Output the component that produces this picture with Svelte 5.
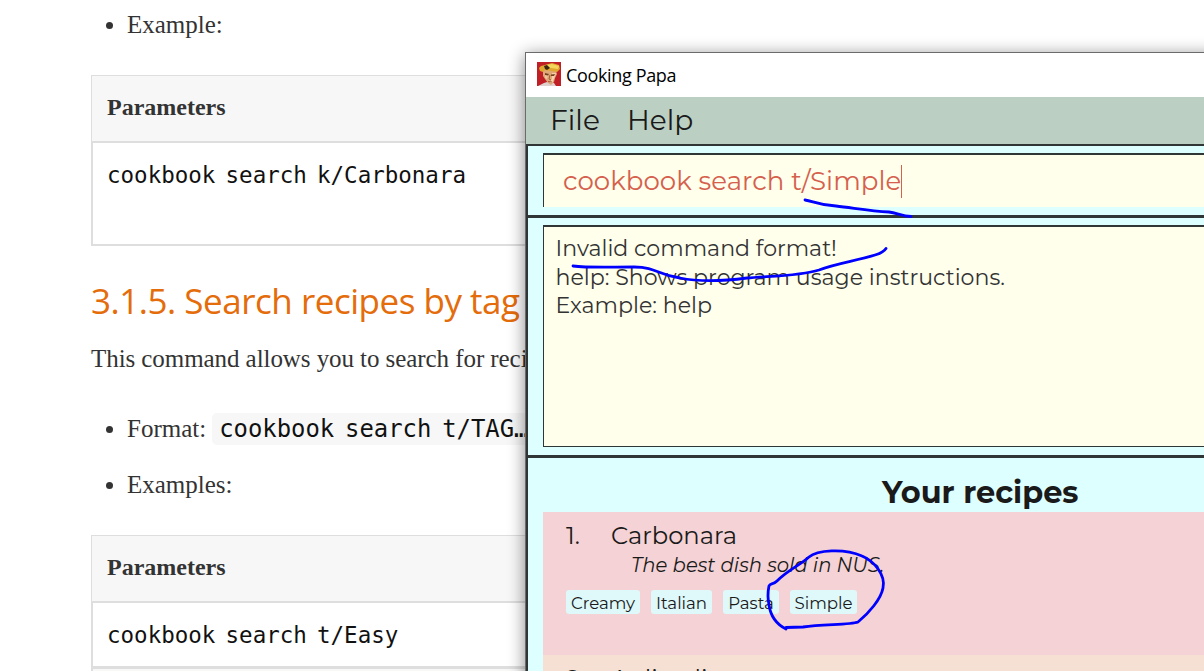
<script>
  const tags = [
    { name: 'Creamy', width: 74 },
    { name: 'Italian', width: 61 },
    { name: 'Pasta', width: 56 },
    { name: 'Simple', width: 67 }
  ];
</script>

<div class="screen">
  <main class="doc">
    <ul class="first"><li>Example:</li></ul>
    <div class="table one">
      <div class="th">Parameters</div>
      <div class="td"><code>cookbook search k/Carbonara</code></div>
    </div>
    <h4>3.1.5. Search recipes by tag</h4>
    <p>This command allows you to search for recipes by tag.</p>
    <ul class="list">
      <li>Format: <code class="chip">cookbook search t/TAG…</code></li>
      <li>Examples:</li>
    </ul>
    <div class="table two">
      <div class="th">Parameters</div>
      <div class="td"><code>cookbook search t/Easy</code></div>
      <div class="td alt"></div>
    </div>
  </main>

  <section class="window">
    <header>
      <svg width="24" height="24" viewBox="0 0 24 24">
        <rect width="24" height="24" fill="#c11f26" />
        <path d="M1 24 7 21 10 20 17 21 19 24Z" fill="#ded1ce" />
        <path d="M6 9 9 6 19 9 20 12 18 16 17 20 14 23 11 21 8 17 6 14Z" fill="#dfa878" />
        <path d="M15 11 19 11 17 17 15 21 13 21 15 16Z" fill="#f6d3ae" />
        <path d="M8 12 11 13 10 17 8 16Z" fill="#f0c59b" />
        <path d="M2 6 4 4 8 3 15 1 22 3 23 7 20 10 14 9 8 8 6 10 3 9Z" fill="#dfa92f" />
        <path d="M9 3 15 2 22 4 21 7 14 6 9 5Z" fill="#f4d65b" />
        <path d="M7 4 10 3 13 6 10 8 8 7Z" fill="#3c2512" />
        <path d="M8 11 12 12 11 13.500 8 13ZM14 12.500 18 12 17 14 14 14Z" fill="#76421f" />
        <path d="M13 13 12 17 14 18M11 19.500 15 20" fill="none" stroke="#a25d35" />
      </svg>
      <span>Cooking Papa</span>
    </header>
    <nav><span class="file">File</span><span class="help">Help</span></nav>
    <div class="body">
      <div class="command"><div class="input"><span>cookbook search t/Simple</span><i></i></div></div>
      <div class="result">
        <div class="output">
          <div>Invalid command format!</div>
          <div>help: Shows program usage instructions.</div>
          <div>Example: help</div>
        </div>
      </div>
      <div class="recipes">
        <h2>Your recipes</h2>
        <article>
          <div class="name"><span class="num">1.</span><span>Carbonara</span></div>
          <div class="desc">The best dish sold in NUS.</div>
          <div class="tags">
            {#each tags as tag}
              <span style="width:{tag.width}px">{tag.name}</span>
            {/each}
          </div>
        </article>
        <article class="second">
          <div class="name"><span class="num">2.</span><span>Aglio olio</span></div>
        </article>
      </div>
    </div>
  </section>

  <svg class="ink" width="1204" height="671" viewBox="0 0 1204 671">
    <path d="M805 200C813 201 817 205 836 206C854 208 870 211 889 212C897 213 902 216 911 216.500" />
    <path d="M573 266C588 268 609 267 634 267C657 267 657 275 680 278C700 282 724 281 747 278C771 276 801 276 819 270C838 263 856 261 875 255C882 253 885 250 886 248.500" />
    <path d="M786 629C780 626 771 619 769 605C767 594 768 591 769 586C770 583 773 585 777 581C789 569 799 566 809 557C817 550 844 548 862 556C874 561 886 575 883 588C881 599 869 613 858 622C850 625 823 624 803 627L786 627.500" />
  </svg>
</div>

<style>
  :global(body) { overflow: hidden; background: #fff; }
  .screen { position: relative; width: 1204px; height: 671px; overflow: hidden; }
  .doc { width: 900px; padding-left: 91px; color: #333; font: 25px/36px "Liberation Serif", serif; white-space: nowrap; }
  ul { margin: 0; padding: 0 0 0 36px; list-style: none; }
  li { display: flex; align-items: center; height: 36px; }
  li::before { content: ''; width: 7px; height: 7px; margin: 1px 14px 0 -21px; border-radius: 50%; background: #333; }
  .first { padding-top: 7px; height: 68px; }
  .table { border: 1px solid #dedede; box-sizing: border-box; }
  .th { height: 65px; box-sizing: border-box; padding: 13px 15px; font-size: 24px; font-weight: bold; background: #f7f7f8; }
  .td { box-sizing: border-box; border: solid #dedede; border-width: 2px 1px 1px; padding: 14px; color: #111; }
  .one { height: 171px; }
  .one .td { height: 104px; }
  .two { margin-top: 32px; }
  .two .td { height: 66px; }
  .two .alt { background: #f8f8f7; }
  code { font: 22.5px/36px "DejaVu Sans Mono", monospace; word-spacing: -.15em; color: #111; }
  .chip { font-size: 23.9px; line-height: 32px; padding: 0 7px; margin-left: 6px; border-radius: 5px; background: #f7f7f8; }
  h4 { margin: 31px 0 0; height: 48px; font: 400 35px/48px "Open Sans", sans-serif; color: #e46c0a; letter-spacing: -.48px; }
  p { margin: 16px 0 34px; letter-spacing: -.07px; }
  .list { display: flex; flex-direction: column; gap: 20px; }
  .window { position: absolute; left: 525px; top: 52px; width: 760px; height: 800px; box-sizing: border-box; border: 1px solid #6b6b6b; background: #fff; box-shadow: 0 3px 16px rgba(0,0,0,.48); display: flex; flex-direction: column; color: #1a1a1a; font-family: Montserrat, Inter, sans-serif; white-space: nowrap; }
  header { flex: none; height: 44px; display: flex; align-items: center; padding-left: 11px; gap: 5px; color: #000; font: 18px "Open Sans", sans-serif; box-sizing: border-box; }
  header svg { margin-top: -2px; }
  header span { letter-spacing: -.35px; }
  nav { flex: none; height: 47px; display: flex; background: #bccfc3; padding-left: 24px; font-size: 28px; line-height: 47px; }
  .file { width: 77px; }
  .file, .help { letter-spacing: .05px; }
  .body { flex: 1; display: flex; flex-direction: column; border-left: 2px solid #303535; border-top: 2px solid #303535; background: #deffff; }
  .command { flex: none; height: 69px; box-sizing: border-box; padding: 7px 0 0 15px; }
  .input { height: 54px; box-sizing: border-box; border: solid #303535; border-width: 2px 0 0 1px; background: #ffffec; display: flex; align-items: center; padding-left: 19px; color: #d5604d; font-size: 26px; letter-spacing: .05px; }
  .input i { width: 1px; height: 33px; background: #d5604d; }
  .result { flex: none; height: 240px; box-sizing: border-box; border-top: 3px solid #303535; padding: 7px 0 0 15px; }
  .output { height: 222px; box-sizing: border-box; border: solid #303535; border-width: 2px 0 1px 1px; background: #ffffec; padding: 8px 0 0 11.5px; font-size: 22.1px; line-height: 28.5px; color: #333; }
  .recipes { flex: 1; border-top: 3px solid #303535; padding-left: 15px; }
  h2 { margin: 0; height: 54px; padding: 16px 0 0 339px; box-sizing: border-box; font-size: 30.4px; line-height: 38px; font-weight: 700; }
  article { height: 143px; background: #f4d2d5; padding: 8px 0 0 23px; box-sizing: border-box; }
  .second { background: #f5e0d3; }
  .name { height: 32px; line-height: 32px; display: flex; font-size: 24.2px; }
  .num { width: 45px; }
  .desc { font-size: 19.6px; font-style: italic; height: 27px; line-height: 27px; padding-left: 65px; letter-spacing: .03px; }
  .tags { display: flex; gap: 11px; margin-top: 11px; }
  .tags span { height: 24px; line-height: 26px; border-radius: 3px; background: #dff8fa; text-align: center; font-size: 16.6px; }
  .ink { position: absolute; inset: 0; fill: none; stroke: #00f; stroke-width: 2.8; stroke-linecap: round; stroke-linejoin: round; }
</style>
